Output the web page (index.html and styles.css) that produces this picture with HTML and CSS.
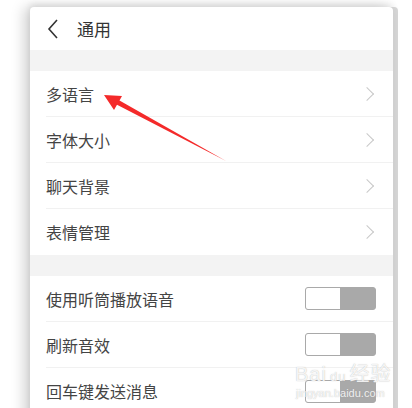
FILE: index.html
```html
<!DOCTYPE html>
<html lang="zh-CN">
<head>
  <meta charset="UTF-8">
  <meta name="viewport" content="width=device-width, initial-scale=1.0">
  <title>通用</title>
  <link rel="stylesheet" href="styles.css">
</head>
<body>
  <div class="page">
    <div class="card">
      <div class="header">
        <svg class="back" width="12" height="20" viewBox="0 0 12 20">
          <path d="M10 1 L2 10 L10 19" fill="none" stroke="#333" stroke-width="1.6"/>
        </svg>
        <span class="title">通用</span>
      </div>

      <div class="band"></div>
      <div class="group">
        <div class="row"><span>多语言</span><i class="chev"></i></div>
        <div class="row"><span>字体大小</span><i class="chev"></i></div>
        <div class="row"><span>聊天背景</span><i class="chev"></i></div>
        <div class="row"><span>表情管理</span><i class="chev"></i></div>
      </div>

      <div class="band"></div>
      <div class="group">
        <div class="row"><span>使用听筒播放语音</span><div class="toggle"><b></b></div></div>
        <div class="row"><span>刷新音效</span><div class="toggle"><b></b></div></div>
        <div class="row"><span>回车键发送消息</span><div class="toggle"><b></b></div></div>
      </div>

      <!-- red annotation arrow -->
      <svg class="arrow" width="363" height="200" viewBox="0 0 363 200">
        <polygon points="74,88 92,89 89.5,93.5 196,154 87,97.8 84,103" fill="#f42a2a"/>
      </svg>

      <div class="mark">
        <span class="mark-top">Bai<span class="paw">du</span>经验</span>
        <span class="mark-url">jingyan.baidu.com</span>
      </div>
    </div>
  </div>
</body>
</html>
```

FILE: styles.css
```css
body {
  margin: 0;
  background: #fff;
  font-family: "Noto Sans CJK SC", "Noto Sans", sans-serif;
  color: #444;
  overflow: hidden;
}
.page {
  padding: 7px 0 0 30px;
  height: 408px;
  box-sizing: border-box;
}
.card {
  position: relative;
  width: 363px;
  height: 420px;
  background: #fff;
  border-radius: 4px 4px 0 0;
  box-shadow: -6px 0 14px rgba(0, 0, 0, 0.18), 5px 0 0 #d6d6d6, 0 -3px 6px rgba(0, 0, 0, 0.08);
}
.header {
  height: 43px;
  display: flex;
  align-items: center;
  padding-left: 17px;
}
.back {
  display: block;
  margin-right: 18px;
}
.title {
  font-size: 17px;
  color: #333;
}
.band {
  height: 21px;
  background: #f3f3f3;
}
.row {
  height: 45px;
  margin-left: 16px;
  padding-right: 17px;
  display: flex;
  align-items: center;
  justify-content: space-between;
  border-bottom: 1px solid #f1f1f1;
  font-size: 16px;
}
.row:last-child {
  border-bottom: none;
  height: 46px;
}
.chev {
  width: 9px;
  height: 9px;
  border-top: 1.3px solid #c8c8c8;
  border-right: 1.3px solid #c8c8c8;
  transform: rotate(45deg);
  margin-right: 4px;
}
.toggle {
  width: 71px;
  height: 23px;
  box-sizing: border-box;
  border: 1px solid #a9a9a9;
  border-radius: 3px;
  background: #a9a9a9;
  display: flex;
}
.toggle b {
  width: 34px;
  background: #fff;
  border-radius: 2px 0 0 2px;
}
.arrow {
  position: absolute;
  left: 0;
  top: 0;
}
.mark {
  position: absolute;
  left: 265px;
  top: 357px;
  display: flex;
  flex-direction: column;
  color: rgba(255, 255, 255, 0.85);
  text-shadow: 0 0 1px rgba(150, 150, 150, 0.7);
  font-family: "Liberation Sans", "Noto Sans CJK SC", sans-serif;
}
.mark-top {
  font-size: 20px;
  line-height: 20px;
  letter-spacing: 1px;
}
.paw {
  font-size: 13px;
  margin: 0 3px;
}
.mark-url {
  font-size: 11px;
  line-height: 13px;
  margin-left: 1px;
}
```
